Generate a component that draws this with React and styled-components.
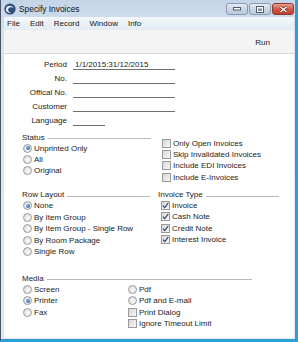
import React from "react";
import styled, { createGlobalStyle } from "styled-components";

const GlobalStyle = createGlobalStyle`
  html, body {
    margin: 0;
    padding: 0;
    background: #fff;
  }
  body {
    font-family: "Liberation Sans", Arial, sans-serif;
    font-size: 8px;
    color: #1b1b1b;
  }
`;

const Window = styled.div`
  width: 298px;
  height: 342px;
  box-sizing: border-box;
  display: flex;
  flex-direction: column;
  background: linear-gradient(#c4d5e8, #d8e3f0 40px, #dfe8f3);
  border-left: 1px solid #4b5561;
  border-right: 3px solid #2b9fd6;
  border-bottom: 3px solid #2b9fd6;
  padding: 0 1px 1px 3px;
`;

const TitleBar = styled.div`
  height: 17px;
  display: flex;
  align-items: center;
  gap: 3px;
  flex-shrink: 0;
`;

const Title = styled.div`
  font-size: 8.4px;
  color: #111;
  flex: 1;
`;

const WinButtons = styled.div`
  display: flex;
  gap: 1px;
  align-self: flex-start;
  margin-top: 3px;
`;

const WinButton = styled.div`
  width: 22px;
  height: 12px;
  box-sizing: border-box;
  border: 1px solid ${(p) => (p.$close ? "#8d3a32" : "#8a9bb0")};
  border-radius: 3px;
  background: ${(p) =>
    p.$close
      ? "linear-gradient(#e5a193, #cf5b48 50%, #c0412d)"
      : "linear-gradient(#e6edf6, #c9d6e5 50%, #bccbdc)"};
  display: flex;
  align-items: center;
  justify-content: center;
`;

const MenuBar = styled.div`
  height: 13px;
  display: flex;
  align-items: center;
  gap: 10px;
  padding-left: 3px;
  background: linear-gradient(#f5f8fc, #e4ebf4);
  flex-shrink: 0;
`;

const MenuItem = styled.span`
  color: #151515;
`;

const Toolbar = styled.div`
  height: 22px;
  display: flex;
  align-items: center;
  justify-content: flex-end;
  padding-right: 24px;
  padding-top: 1px;
  background: #f4f4f4;
  border-bottom: 1px solid #d9d9d9;
  flex-shrink: 0;
`;

const Content = styled.div`
  flex: 1;
  background: #fff;
  padding-top: 3px;
  display: flex;
  flex-direction: column;
`;

const Form = styled.div`
  display: grid;
  grid-template-columns: 63px auto;
  grid-auto-rows: 14px;
  column-gap: 6px;
  align-items: center;
`;

const Label = styled.div`
  text-align: right;
`;

const Field = styled.div`
  width: ${(p) => p.$w}px;
  height: 10px;
  line-height: 10px;
  border-bottom: 1px solid #6f6f6f;
  padding-left: 2px;
  box-sizing: border-box;
  margin-top: 1px;
`;

const Section = styled.div`
  display: grid;
  grid-template-columns: ${(p) => p.$cols};
  column-gap: 8px;
  margin-left: 18px;
  margin-top: ${(p) => p.$top}px;
`;

const Column = styled.div`
  display: flex;
  flex-direction: column;
  padding-top: ${(p) => p.$pad || 0}px;
`;

const Header = styled.div`
  height: 11px;
  display: flex;
  align-items: center;
  width: ${(p) => (p.$w ? `${p.$w}px` : "auto")};
`;

const HeaderLine = styled.div`
  flex: 1;
  margin-left: 3px;
  margin-top: 3px;
  border-top: 1px solid #b9b9b9;
`;

const Option = styled.div`
  height: ${(p) => p.$h || 11}px;
  display: flex;
  align-items: center;
  gap: 2px;
  padding-left: ${(p) => p.$indent || 1}px;
  white-space: nowrap;
`;

const Radio = styled.span`
  width: 9px;
  height: 9px;
  box-sizing: border-box;
  border-radius: 50%;
  border: 1px solid #9a9a9a;
  background: radial-gradient(circle at 60% 60%, #fbfbfb, #d6d6d6);
  display: flex;
  align-items: center;
  justify-content: center;
  flex-shrink: 0;
  &::after {
    content: "";
    display: ${(p) => (p.$on ? "block" : "none")};
    width: 4px;
    height: 4px;
    border-radius: 50%;
    background: radial-gradient(circle at 35% 35%, #7fb4ea, #1c4f94);
  }
`;

const Box = styled.span`
  width: 9px;
  height: 9px;
  box-sizing: border-box;
  border: 1px solid #9a9a9a;
  background: linear-gradient(135deg, #d8d8d8, #f6f6f6);
  display: flex;
  align-items: center;
  justify-content: center;
  flex-shrink: 0;
`;

const MediaGrid = styled.div`
  display: grid;
  grid-template-columns: 105px auto;
`;

const AppLogo = () => (
  <svg width="12" height="12" viewBox="0 0 12 12">
    <circle cx="6" cy="6" r="5.6" fill="#2f4f7a" />
    <path d="M3 3.5 C5 2 8.5 2.5 9.5 5 C8 4 5.5 4 4.5 5.5 C3.5 7 4.5 9 7 9.5 C4.5 10.5 1.5 8.5 2 6 C2.2 5 2.5 4 3 3.5Z" fill="#e9eef5" />
  </svg>
);

const Check = () => (
  <svg width="7" height="7" viewBox="0 0 7 7">
    <path d="M1 3.6 L2.8 5.6 L6.2 1" stroke="#2b3f78" strokeWidth="1.2" fill="none" />
  </svg>
);

const RadioOption = ({ on, children, h, indent }) => (
  <Option $h={h} $indent={indent}>
    <Radio $on={on} />
    <span>{children}</span>
  </Option>
);

const CheckOption = ({ on, children, h, indent = 3 }) => (
  <Option $h={h} $indent={indent}>
    <Box>{on && <Check />}</Box>
    <span>{children}</span>
  </Option>
);

const App = () => {
  return (
    <>
      <GlobalStyle />
      <Window>
        <TitleBar>
          <AppLogo />
          <Title>Specify Invoices</Title>
          <WinButtons>
            <WinButton>
              <svg width="8" height="4" viewBox="0 0 8 4">
                <rect x="0.5" y="0.5" width="7" height="2.5" fill="#fff" stroke="#4e5c70" />
              </svg>
            </WinButton>
            <WinButton>
              <svg width="8" height="7" viewBox="0 0 8 7">
                <rect x="0.5" y="0.5" width="7" height="6" fill="#fff" stroke="#4e5c70" />
                <rect x="2" y="2.5" width="4" height="2.5" fill="#7f8ea3" />
              </svg>
            </WinButton>
            <WinButton $close>
              <svg width="9" height="7" viewBox="0 0 9 7">
                <path d="M1.5 1 L7.5 6 M7.5 1 L1.5 6" stroke="#5a1d16" strokeWidth="2.6" />
                <path d="M1.5 1 L7.5 6 M7.5 1 L1.5 6" stroke="#fff" strokeWidth="1.5" />
              </svg>
            </WinButton>
          </WinButtons>
        </TitleBar>
        <MenuBar>
          <MenuItem>File</MenuItem>
          <MenuItem>Edit</MenuItem>
          <MenuItem>Record</MenuItem>
          <MenuItem>Window</MenuItem>
          <MenuItem>Info</MenuItem>
        </MenuBar>
        <Toolbar>Run</Toolbar>
        <Content>
          <Form>
            <Label>Period</Label>
            <Field $w={102}>1/1/2015:31/12/2015</Field>
            <Label>No.</Label>
            <Field $w={102} />
            <Label>Offical No.</Label>
            <Field $w={102} />
            <Label>Customer</Label>
            <Field $w={102} />
            <Label>Language</Label>
            <Field $w={32} />
          </Form>

          <Section $cols="129px 130px" $top={4.5}>
            <Column>
              <Header>
                Status
                <HeaderLine />
              </Header>
              <RadioOption on>Unprinted Only</RadioOption>
              <RadioOption>All</RadioOption>
              <RadioOption>Original</RadioOption>
            </Column>
            <Column $pad={6}>
              <CheckOption h={11.3}>Only Open Invoices</CheckOption>
              <CheckOption h={11.3}>Skip Invalidated Invoices</CheckOption>
              <CheckOption h={11.3}>Include EDI Invoices</CheckOption>
              <CheckOption h={11.3}>Include E-Invoices</CheckOption>
            </Column>
          </Section>

          <Section $cols="128px 121px" $top={6.5}>
            <Column>
              <Header>
                Row Layout
                <HeaderLine />
              </Header>
              <RadioOption on h={11.5}>None</RadioOption>
              <RadioOption h={11.5}>By Item Group</RadioOption>
              <RadioOption h={11.5}>By Item Group - Single Row</RadioOption>
              <RadioOption h={11.5}>By Room Package</RadioOption>
              <RadioOption h={11.5}>Single Row</RadioOption>
            </Column>
            <Column>
              <Header>
                Invoice Type
                <HeaderLine />
              </Header>
              <CheckOption on h={11.2}>Invoice</CheckOption>
              <CheckOption on h={11.2}>Cash Note</CheckOption>
              <CheckOption on h={11.2}>Credit Note</CheckOption>
              <CheckOption on h={11.2}>Interest Invoice</CheckOption>
            </Column>
          </Section>

          <Section $cols="230px" $top={15}>
            <Column>
              <Header>
                Media
                <HeaderLine />
              </Header>
              <MediaGrid>
                <Column>
                  <RadioOption h={11.5}>Screen</RadioOption>
                  <RadioOption on h={11.5}>Printer</RadioOption>
                  <RadioOption h={11.5}>Fax</RadioOption>
                </Column>
                <Column>
                  <RadioOption h={11.5}>Pdf</RadioOption>
                  <RadioOption h={11.5}>Pdf and E-mail</RadioOption>
                  <CheckOption h={11.5} indent={1}>Print Dialog</CheckOption>
                  <CheckOption h={11.5} indent={1}>Ignore Timeout Limit</CheckOption>
                </Column>
              </MediaGrid>
            </Column>
          </Section>
        </Content>
      </Window>
    </>
  );
};

export default App;
